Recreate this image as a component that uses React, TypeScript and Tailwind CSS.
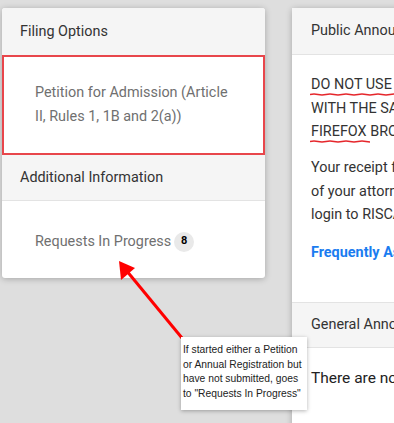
import { FC } from "react";

const Squiggle: FC<{ width: number }> = ({ width }) => {
  let d = "M0 1.5";
  for (let x = 0; x < width; x += 16) d += ` Q${x + 4} 0.6 ${x + 8} 1.5 T${x + 16} 1.5`;
  return (
    <svg className="absolute left-[-1px] -bottom-[3px]" width={width} height={3} viewBox={`0 0 ${width} 3`}>
      <path d={d} fill="none" stroke="#e5262b" strokeWidth={1.5} />
    </svg>
  );
};

const App: FC = () => {
  return (
    <div
      className="relative h-[423px] w-[394px] overflow-hidden bg-[#dedede]"
      style={{ fontFamily: "Roboto, 'Noto Sans', sans-serif" }}
    >
      <div className="flex items-start pt-2">
        {/* left column */}
        <div className="ml-[2px] w-[263px] shrink-0 overflow-hidden rounded-[3px] bg-white shadow-[0_1px_6px_rgba(0,0,0,0.25)]">
          <div className="flex h-[47px] items-center bg-[#f5f5f5] px-[18px] text-[14.4px] text-[#333]">Filing Options</div>
          <div className="flex h-[100px] flex-col justify-center border-2 border-[#e8464b] pl-[31px] text-[14.4px] leading-[24px] text-[#707070]">
            <div>Petition for Admission (Article</div>
            <div>II, Rules 1, 1B and 2(a))</div>
          </div>
          <div className="flex h-[46px] items-center border-b border-[#e3e3e3] bg-[#f5f5f5] px-[18px] text-[14.4px] text-[#333]">
            Additional Information
          </div>
          <div className="flex h-[77px] items-center pl-[33px] pt-[4px] text-[14.4px] text-[#707070]">
            <span>Requests In Progress</span>
            <span className="ml-[3px] flex h-[20px] w-[20px] items-center justify-center rounded-full bg-[#e9e9e9] text-[11px] font-bold text-black">
              8
            </span>
          </div>
        </div>

        {/* right column */}
        <div className="ml-[27px] h-[430px] w-[420px] shrink-0 rounded-[3px] bg-white shadow-[0_1px_6px_rgba(0,0,0,0.25)]">
          <div className="flex h-[47px] items-center border-b border-[#e3e3e3] bg-[#f5f5f5] px-[19px] text-[14.4px] text-[#333]">
            Public Announcements
          </div>
          <div className="px-[19px] pt-[18px] text-[14.4px] leading-[23.5px] text-[#333]">
            <div className="whitespace-nowrap">
              <span className="relative">
                DO NOT USE INTERNET EXPLORER
                <Squiggle width={240} />
              </span>
            </div>
            <div className="whitespace-nowrap">WITH THE SAFARI OR GOOGLE CHROME</div>
            <div className="whitespace-nowrap">
              <span className="relative">
                FIREFOX
                <Squiggle width={60} />
              </span>{" "}
              BROWSER.
            </div>
            <div className="mt-[12.5px] whitespace-nowrap">Your receipt for payment is available in the</div>
            <div className="whitespace-nowrap">of your attorney profile. Please</div>
            <div className="whitespace-nowrap">login to RISCA to view.</div>
            <div className="mt-[14.5px] whitespace-nowrap font-bold text-[#1a7cf0]">Frequently Asked Questions</div>
          </div>
          <div className="mt-[37px] flex h-[46px] items-center border-y border-[#e3e3e3] bg-[#f5f5f5] px-[19px] text-[14.4px] text-[#333]">
            General Announcements
          </div>
          <div className="px-[19px] pt-[19px] text-[15.5px] text-[#222]">There are no announcements.</div>
        </div>
      </div>

      {/* annotation arrow */}
      <svg className="pointer-events-none absolute left-0 top-0" width={394} height={423}>
        <line x1={182} y1={338} x2={126} y2={270} stroke="#ff0000" strokeWidth={3} />
        <polygon points="119,261 121,280 135,268" fill="#ff0000" />
      </svg>

      {/* callout note */}
      <div
        className="absolute left-[181px] top-[337px] h-[73px] w-[126px] bg-white pl-[2px] pt-[6px] text-[10.3px] leading-[14.5px] text-[#222] shadow-[0_1px_4px_rgba(0,0,0,0.3)]"
        style={{ fontFamily: "'Liberation Sans Narrow', 'Liberation Sans', sans-serif" }}
      >
        <div className="whitespace-nowrap">If started either a Petition</div>
        <div className="whitespace-nowrap">or Annual Registration but</div>
        <div className="whitespace-nowrap">have not submitted, goes</div>
        <div className="whitespace-nowrap">to "Requests In Progress"</div>
      </div>
    </div>
  );
};

export default App;
